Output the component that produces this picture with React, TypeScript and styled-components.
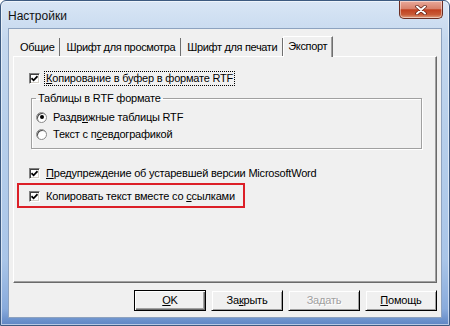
import React from "react";
import styled, { createGlobalStyle } from "styled-components";

const GlobalStyle = createGlobalStyle`
  html, body { margin: 0; padding: 0; background: #ffffff; }
  * { box-sizing: border-box; }
`;

const Window = styled.div`
  width: 450px;
  height: 326px;
  display: flex;
  flex-direction: column;
  padding: 0 7px 7px 7px;
  border: 1px solid #3d5a80;
  border-radius: 6px 6px 0 0;
  background: linear-gradient(
    to bottom,
    #d9e6f5 0%,
    #c4d7ee 12%,
    #b7cfeb 40%,
    #a9c5e8 80%,
    #89abdc 95%,
    #5f86c4 100%
  );
  box-shadow: inset 0 0 0 1px rgba(255, 255, 255, 0.55);
  font-family: "Liberation Sans", Arial, sans-serif;
  font-size: 11px;
  letter-spacing: -0.2px;
  color: #000;
`;

const TitleBar = styled.div`
  height: 27px;
  display: flex;
  align-items: flex-start;
`;

const TitleText = styled.div`
  padding-top: 8px;
  font-family: "Liberation Sans", Arial, sans-serif;
  font-size: 12px;
  letter-spacing: 0;
  color: #111;
`;

const CloseButton = styled.div`
  margin-left: auto;
  margin-right: -1px;
  width: 44px;
  height: 18px;
  border: 1px solid #6b2d22;
  border-top: none;
  border-radius: 0 0 5px 5px;
  background: linear-gradient(
    to bottom,
    #e9a99a 0%,
    #d8826c 45%,
    #c0401f 52%,
    #c85a36 80%,
    #e0a080 100%
  );
  box-shadow: inset 0 0 0 1px rgba(255, 255, 255, 0.45);
  display: flex;
  align-items: center;
  justify-content: center;
`;

const Client = styled.div`
  flex: 1;
  display: flex;
  flex-direction: column;
  background: #f0f0f0;
  border: 1px solid #8da2bf;
  padding: 5px 4px 0 4px;
`;

const TabStrip = styled.div`
  height: 22px;
  display: flex;
  align-items: flex-end;
  padding-left: 1px;
`;

const Tab = styled.div<{ $active?: boolean }>`
  position: relative;
  height: ${(p) => (p.$active ? "21px" : "18px")};
  margin-bottom: ${(p) => (p.$active ? "-1px" : "0")};
  padding: ${(p) => (p.$active ? "3px 5px 0 4px" : "3px 5px 0 6px")};
  background: #f0f0f0;
  border-right: 1px solid #6f6f6f;
  border-left: ${(p) => (p.$active ? "1px solid #ffffff" : "none")};
  border-top: ${(p) => (p.$active ? "1px solid #ffffff" : "none")};
  box-shadow: ${(p) => (p.$active ? "inset -1px 0 0 #a0a0a0" : "none")};
  z-index: ${(p) => (p.$active ? 1 : 0)};
  white-space: nowrap;
  line-height: 13px;
  letter-spacing: -0.35px;
`;

const Panel = styled.div`
  height: 227px;
  display: flex;
  flex-direction: column;
  align-items: flex-start;
  background: #f0f0f0;
  border-top: 1px solid #ffffff;
  border-left: 1px solid #ffffff;
  border-right: 1px solid #6a6a6a;
  border-bottom: 1px solid #6a6a6a;
  box-shadow: inset -1px -1px 0 #a0a0a0;
  padding: 13px 14px 0 15px;
`;

const Row = styled.label`
  height: 16px;
  display: flex;
  align-items: center;
  gap: 6px;
  white-space: nowrap;
  line-height: 13px;
`;

const CheckBox = styled.span`
  width: 11px;
  height: 11px;
  flex: none;
  background: #ffffff;
  border-top: 1px solid #808080;
  border-left: 1px solid #808080;
  border-right: 1px solid #ffffff;
  border-bottom: 1px solid #ffffff;
  box-shadow: inset 1px 1px 0 #404040, inset -1px -1px 0 #d4d0c8;
  display: flex;
  align-items: center;
  justify-content: center;
`;

const RadioBox = styled.span`
  width: 11px;
  height: 11px;
  flex: none;
  border-radius: 50%;
  background: #ffffff;
  border: 1px solid #8a8a8a;
  box-shadow: inset 1px 1px 0 #505050;
  display: flex;
  align-items: center;
  justify-content: center;
`;

const Dot = styled.span`
  width: 4px;
  height: 4px;
  border-radius: 50%;
  background: #000;
`;

const FocusText = styled.span`
  outline: 1px dotted #000;
  outline-offset: 0;
  padding: 0 1px;
  margin-left: -1px;
`;

const U = styled.span`
  text-decoration: underline;
`;

const Group = styled.fieldset`
  align-self: stretch;
  margin: 6px 0 0 2px;
  padding: 4px 5px 6px 4px;
  border: 1px solid #a0a0a0;
  box-shadow: inset 1px 1px 0 #ffffff, 1px 1px 0 #ffffff;
  display: flex;
  flex-direction: column;
  gap: 1px;
  min-width: 0;
`;

const Legend = styled.legend`
  padding: 0 2px;
  line-height: 13px;
`;

const WarnRow = styled(Row)`
  margin-top: 16px;
`;

const Highlight = styled.div`
  margin: 2px 0 0 -12px;
  padding: 3px 8px 2px 10px;
  border: 2px solid #dc1f27;
`;

const ButtonRow = styled.div`
  display: flex;
  justify-content: flex-end;
  gap: 5px;
  padding: 7px 0 6px 0;
`;

const Button = styled.div<{ $default?: boolean; $disabled?: boolean }>`
  width: 72px;
  height: 21px;
  display: flex;
  align-items: center;
  justify-content: center;
  background: #f0f0f0;
  border: 1px solid ${(p) => (p.$default ? "#000000" : "transparent")};
  border-right-color: #000000;
  border-bottom-color: #000000;
  box-shadow: ${(p) =>
    p.$default
      ? "inset 1px 1px 0 #ffffff, inset -1px -1px 0 #6a6a6a, inset -2px -2px 0 #a0a0a0"
      : "inset 1px 1px 0 #ffffff, inset -1px -1px 0 #a0a0a0"};
  color: ${(p) => (p.$disabled ? "#a0a0a0" : "#000")};
  text-shadow: ${(p) => (p.$disabled ? "1px 1px 0 #ffffff" : "none")};
  line-height: 13px;
`;

const Check = () => (
  <CheckBox>
    <svg width="7" height="7" viewBox="0 0 7 7">
      <path d="M0.5 3.2 L2.6 5.3 L6.5 1.2" stroke="#000" strokeWidth="1.7" fill="none" />
    </svg>
  </CheckBox>
);

export default function App() {
  return (
    <>
      <GlobalStyle />
      <Window>
        <TitleBar>
          <TitleText>Настройки</TitleText>
          <CloseButton>
            <svg width="12" height="10" viewBox="0 0 12 10">
              <path
                d="M2 1.5 L10 8.5 M10 1.5 L2 8.5"
                stroke="#5a1a10"
                strokeWidth="3.4"
                strokeLinecap="round"
                fill="none"
              />
              <path
                d="M2 1.5 L10 8.5 M10 1.5 L2 8.5"
                stroke="#ffffff"
                strokeWidth="2"
                strokeLinecap="round"
                fill="none"
              />
            </svg>
          </CloseButton>
        </TitleBar>
        <Client>
          <TabStrip>
            <Tab>Общие</Tab>
            <Tab>Шрифт для просмотра</Tab>
            <Tab>Шрифт для печати</Tab>
            <Tab $active>Экспорт</Tab>
          </TabStrip>
          <Panel>
            <Row>
              <Check />
              <FocusText>
                <U>К</U>опирование в буфер в формате RTF
              </FocusText>
            </Row>
            <Group>
              <Legend>Таблицы в RTF формате</Legend>
              <Row>
                <RadioBox>
                  <Dot />
                </RadioBox>
                <span>
                  Раздв<U>и</U>жные таблицы RTF
                </span>
              </Row>
              <Row>
                <RadioBox />
                <span>
                  Текст с п<U>с</U>евдографикой
                </span>
              </Row>
            </Group>
            <WarnRow>
              <Check />
              <span>
                <U>П</U>редупреждение об устаревшей версии MicrosoftWord
              </span>
            </WarnRow>
            <Highlight>
              <Row>
                <Check />
                <span>
                  Копировать текст вместе со <U>с</U>сылками
                </span>
              </Row>
            </Highlight>
          </Panel>
          <ButtonRow>
            <Button $default>
              <span>
                <U>O</U>K
              </span>
            </Button>
            <Button>
              <span>
                За<U>к</U>рыть
              </span>
            </Button>
            <Button $disabled>
              <span>
                За<U>д</U>ать
              </span>
            </Button>
            <Button>
              <span>
                <U>П</U>омощь
              </span>
            </Button>
          </ButtonRow>
        </Client>
      </Window>
    </>
  );
}
